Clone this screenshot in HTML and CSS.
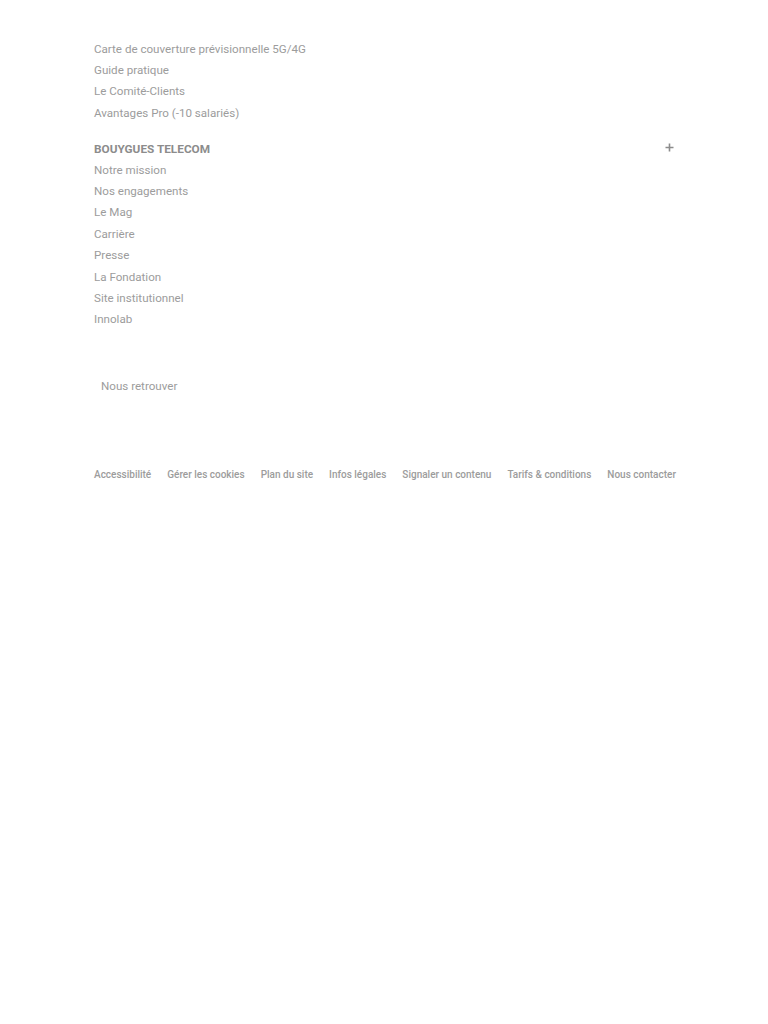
FILE: index.html
```html
<!DOCTYPE html>
<html lang="fr">
<head>
<meta charset="utf-8">
<link rel="stylesheet" href="styles.css">
</head>
<body>
<footer class="footer">
  <ul class="links">
    <li><a href="#">Carte de couverture prévisionnelle 5G/4G</a></li>
    <li><a href="#">Guide pratique</a></li>
    <li><a href="#">Le Comité-Clients</a></li>
    <li><a href="#">Avantages Pro (-10 salariés)</a></li>
  </ul>
  <div class="group">
    <div class="group-head">
      <span class="group-title">BOUYGUES TELECOM</span>
      <svg class="plus" width="9" height="9" viewBox="0 0 9 9" aria-hidden="true"><path d="M4.5 0.5v8M0.5 4.5h8" stroke="#8c8c8c" stroke-width="1.6" fill="none"/></svg>
    </div>
    <ul class="links">
      <li><a href="#">Notre mission</a></li>
      <li><a href="#">Nos engagements</a></li>
      <li><a href="#">Le Mag</a></li>
      <li><a href="#">Carrière</a></li>
      <li><a href="#">Presse</a></li>
      <li><a href="#">La Fondation</a></li>
      <li><a href="#">Site institutionnel</a></li>
      <li><a href="#">Innolab</a></li>
    </ul>
  </div>
  <div class="social">Nous retrouver</div>
  <nav class="legal">
    <a href="#">Accessibilité</a>
    <a href="#">Gérer les cookies</a>
    <a href="#">Plan du site</a>
    <a href="#">Infos légales</a>
    <a href="#">Signaler un contenu</a>
    <a href="#">Tarifs &amp; conditions</a>
    <a href="#">Nous contacter</a>
  </nav>
</footer>
</body>
</html>
```
FILE: styles.css
```css
html, body {
  margin: 0;
  padding: 0;
  background: #ffffff;
}
body {
  font-family: Roboto, "Liberation Sans", Arial, sans-serif;
  color: #9c9c9c;
}
a {
  color: inherit;
  text-decoration: none;
}
.footer {
  width: 582px;
  margin-left: calc(50% - 290px);
  padding-top: 38.5px;
}
.links {
  list-style: none;
  margin: 0;
  padding: 0;
  font-size: 11.6px;
  line-height: 21.4px;
}
.links li {
  margin: 0;
}
.group {
  margin-top: 14px;
}
.group-head {
  display: flex;
  justify-content: space-between;
  align-items: center;
  height: 21.4px;
  padding-right: 3px;
}
.group-title {
  font-size: 11.8px;
  font-weight: 700;
  color: #8c8c8c;
}
.plus {
  display: block;
  margin-top: -2px;
  margin-right: -1px;
}
.social {
  margin-top: 45px;
  padding-left: 7px;
  font-size: 11.6px;
  line-height: 21.4px;
}
.legal {
  display: flex;
  justify-content: space-between;
  margin-top: 70px;
  font-size: 10px;
  font-weight: 500;
  line-height: 16px;
}
```
